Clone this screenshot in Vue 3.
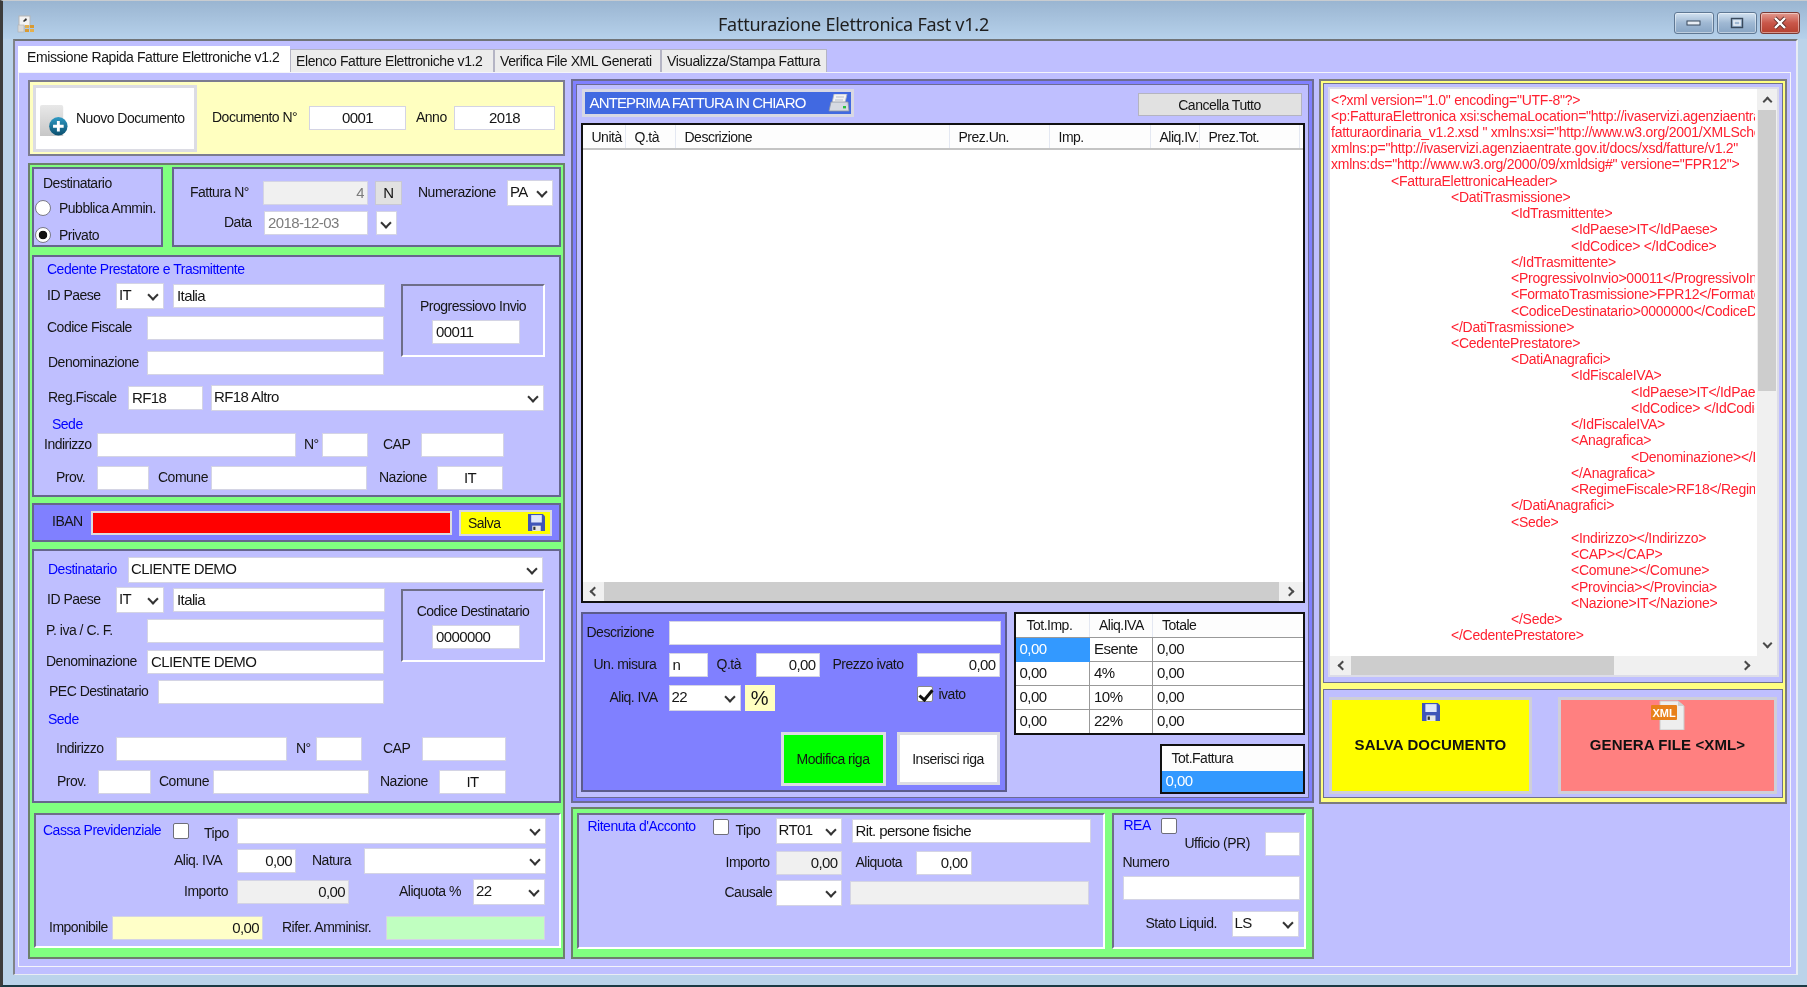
<script setup>
const tabs = [
  { label: 'Emissione Rapida Fatture Elettroniche v1.2', cls: 'tab-a active' },
  { label: 'Elenco Fatture Elettroniche v1.2', cls: 'tab-b' },
  { label: 'Verifica File XML Generati', cls: 'tab-c' },
  { label: 'Visualizza/Stampa Fattura', cls: 'tab-d' },
];

const listCols = [
  { label: 'Unità', w: 43 },
  { label: 'Q.tà', w: 50 },
  { label: 'Descrizione', w: 274 },
  { label: 'Prez.Un.', w: 100 },
  { label: 'Imp.', w: 101 },
  { label: 'Aliq.IV.', w: 49 },
  { label: 'Prez.Tot.', w: 100 },
];

const ivaRows = [
  { imp: '0,00', aliq: 'Esente', tot: '0,00', sel: true },
  { imp: '0,00', aliq: '4%', tot: '0,00' },
  { imp: '0,00', aliq: '10%', tot: '0,00' },
  { imp: '0,00', aliq: '22%', tot: '0,00' },
];

// level = numero di tab nel file xml
const xmlLines = [
  [0, '<?xml version="1.0" encoding="UTF-8"?>'],
  [0, '<p:FatturaElettronica xsi:schemaLocation="http://ivaservizi.agenziaentrate.gov.it/docs/xsd/fatture/v1.2'],
  [0, 'fatturaordinaria_v1.2.xsd " xmlns:xsi="http://www.w3.org/2001/XMLSchema-instance"'],
  [0, 'xmlns:p="http://ivaservizi.agenziaentrate.gov.it/docs/xsd/fatture/v1.2"'],
  [0, 'xmlns:ds="http://www.w3.org/2000/09/xmldsig#" versione="FPR12">'],
  [1, '<FatturaElettronicaHeader>'],
  [2, '<DatiTrasmissione>'],
  [3, '<IdTrasmittente>'],
  [4, '<IdPaese>IT</IdPaese>'],
  [4, '<IdCodice> </IdCodice>'],
  [3, '</IdTrasmittente>'],
  [3, '<ProgressivoInvio>00011</ProgressivoInvio>'],
  [3, '<FormatoTrasmissione>FPR12</FormatoTrasmissione>'],
  [3, '<CodiceDestinatario>0000000</CodiceDestinatario>'],
  [2, '</DatiTrasmissione>'],
  [2, '<CedentePrestatore>'],
  [3, '<DatiAnagrafici>'],
  [4, '<IdFiscaleIVA>'],
  [5, '<IdPaese>IT</IdPaese>'],
  [5, '<IdCodice> </IdCodice>'],
  [4, '</IdFiscaleIVA>'],
  [4, '<Anagrafica>'],
  [5, '<Denominazione></Denominazione>'],
  [4, '</Anagrafica>'],
  [4, '<RegimeFiscale>RF18</RegimeFiscale>'],
  [3, '</DatiAnagrafici>'],
  [3, '<Sede>'],
  [4, '<Indirizzo></Indirizzo>'],
  [4, '<CAP></CAP>'],
  [4, '<Comune></Comune>'],
  [4, '<Provincia></Provincia>'],
  [4, '<Nazione>IT</Nazione>'],
  [3, '</Sede>'],
  [2, '</CedentePrestatore>'],
];
</script>

<template>
  <div class="window">
    <header class="titlebar">
      <svg class="app-icon" viewBox="0 0 18 18">
        <rect x="2" y="1" width="11" height="10" fill="#f2f2f2" stroke="#b5b5b5" />
        <path d="M6 6l3-3 1 2-3 2z" fill="#333" />
        <rect x="1" y="10" width="6" height="7" fill="#d9d9d9" stroke="#b0b0b0" stroke-width=".6" />
        <rect x="8" y="10" width="4" height="3" fill="#e5b04c" />
        <rect x="13" y="10" width="4" height="3" fill="#d89a33" />
        <rect x="8" y="14" width="4" height="3" fill="#d89a33" />
        <rect x="13" y="14" width="4" height="3" fill="#e5b04c" />
      </svg>
      <span class="title">Fatturazione Elettronica Fast v1.2</span>
      <div class="win-buttons">
        <button class="win-btn">
          <svg width="16" height="8" viewBox="0 0 16 8"><rect x="1" y="2" width="13" height="4" fill="#e8eef5" stroke="#39495c" /></svg>
        </button>
        <button class="win-btn">
          <svg width="14" height="12" viewBox="0 0 14 12"><rect x="1.5" y="1.5" width="11" height="9" fill="none" stroke="#39495c" stroke-width="1.4" /><rect x="4" y="4" width="6" height="4" fill="none" stroke="#e8eef5" stroke-width="1.6" /></svg>
        </button>
        <button class="win-btn close">
          <svg width="16" height="14" viewBox="0 0 16 14"><path d="M3 2l10 10M13 2L3 12" stroke="#5a2a26" stroke-width="4" /><path d="M3 2l10 10M13 2L3 12" stroke="#fff" stroke-width="2.4" /></svg>
        </button>
      </div>
    </header>

    <div class="client">
      <nav class="tabs">
        <div v-for="t in tabs" :key="t.label" class="tab" :class="t.cls">{{ t.label }}</div>
      </nav>

      <main class="page">
        <!-- colonna sinistra -->
        <section class="col-left">
          <div class="doc-panel">
            <button class="new-doc ml-3">
              <svg class="new-icon" viewBox="0 0 30 32">
                <defs>
                  <linearGradient id="docg" x1="0" y1="0" x2="0" y2="1"><stop offset="0" stop-color="#e8e8e8" /><stop offset="1" stop-color="#c4c4c4" /></linearGradient>
                  <linearGradient id="plusg" x1="0" y1="0" x2="0" y2="1"><stop offset="0" stop-color="#2f9ac4" /><stop offset="1" stop-color="#0b4f6e" /></linearGradient>
                </defs>
                <rect x="0" y="0" width="24" height="35" rx="2" fill="url(#docg)" />
                <circle cx="19" cy="22" r="9.5" fill="url(#plusg)" />
                <path d="M19 16.5v11M13.5 22h11" stroke="#fff" stroke-width="3" />
              </svg>
              <span>Nuovo Documento</span>
            </button>
            <span class="lab ml-15 w-97">Documento N°</span>
            <input class="tb center w-97" value="0001" />
            <span class="lab ml-10 w-38">Anno</span>
            <input class="tb center w-101" value="2018" />
          </div>

          <div class="green-panel">
            <div class="flex gap-9">
              <div class="panel radio-panel">
                <div class="line mt-5 ml-9">Destinatario</div>
                <label class="radio-row mt-8"><input type="radio" name="dest" /><span>Pubblica Ammin.</span></label>
                <label class="radio-row mt-11"><input type="radio" name="dest" checked /><span>Privato</span></label>
              </div>
              <div class="panel fattura-panel">
                <div class="row mt-12">
                  <span class="lab ml-16 w-73">Fattura N°</span>
                  <input class="tb right disabled grey w-105" value="4" />
                  <button class="btn-n ml-7 w-27">N</button>
                  <span class="lab ml-16 w-89">Numerazione</span>
                  <label class="combo w-46"><select><option>PA</option></select></label>
                </div>
                <div class="row mt-6">
                  <span class="lab ml-50 w-40">Data</span>
                  <input class="tb grey w-104" value="2018-12-03" />
                  <label class="combo only-arrow ml-8 w-21"><select></select></label>
                </div>
              </div>
            </div>

            <div class="panel cedente-panel mt-8">
              <div class="line blue mt-3 ml-13">Cedente Prestatore e Trasmittente</div>
              <div class="flex mt-6">
                <div class="w-350">
                  <div class="row">
                    <span class="lab ml-13 w-69">ID Paese</span>
                    <label class="combo w-48"><select><option>IT</option></select></label>
                    <input class="tb ml-9 w-212" value="Italia" />
                  </div>
                  <div class="row mt-8">
                    <span class="lab ml-13 w-100">Codice Fiscale</span>
                    <input class="tb w-237" />
                  </div>
                  <div class="row mt-11">
                    <span class="lab ml-14 w-99">Denominazione</span>
                    <input class="tb w-237" />
                  </div>
                </div>
                <div class="groove code-box ml-17">
                  <div class="code-title">Progressiovo Invio</div>
                  <input class="tb code-input" value="00011" />
                </div>
              </div>
              <div class="row mt-11">
                <span class="lab ml-14 w-80">Reg.Fiscale</span>
                <input class="tb w-75" value="RF18" />
                <label class="combo ml-8 w-333"><select><option>RF18 Altro</option></select></label>
              </div>
              <div class="line blue mt-5 ml-18">Sede</div>
              <div class="row">
                <span class="lab ml-10 w-53">Indirizzo</span>
                <input class="tb w-199" />
                <span class="lab ml-8 w-18">N°</span>
                <input class="tb w-46" />
                <span class="lab ml-15 w-38">CAP</span>
                <input class="tb w-83" />
              </div>
              <div class="row mt-9">
                <span class="lab ml-22 w-41">Prov.</span>
                <input class="tb w-52" />
                <span class="lab ml-9 w-53">Comune</span>
                <input class="tb w-156" />
                <span class="lab ml-12 w-58">Nazione</span>
                <input class="tb center w-66" value="IT" />
              </div>
            </div>

            <div class="panel iban-panel mt-6">
              <span class="lab ml-18 w-40">IBAN</span>
              <input class="tb iban-input w-359" />
              <button class="salva ml-8">
                <span>Salva</span>
                <svg class="floppy" viewBox="0 0 16 16"><path d="M0 0h14l2 2v14H0z" fill="#3f55b8" /><rect x="3" y="1" width="10" height="7" fill="#dfe6fa" /><rect x="4" y="11" width="8" height="5" fill="#e6e6e6" /><rect x="5" y="12" width="2" height="3" fill="#333" /></svg>
              </button>
            </div>

            <div class="panel dest-panel mt-7">
              <div class="row mt-7">
                <span class="lab blue ml-14 w-80">Destinatario</span>
                <label class="combo w-415"><select><option>CLIENTE DEMO</option></select></label>
              </div>
              <div class="flex mt-6">
                <div class="w-350">
                  <div class="row">
                    <span class="lab ml-13 w-69">ID Paese</span>
                    <label class="combo w-48"><select><option>IT</option></select></label>
                    <input class="tb ml-9 w-212" value="Italia" />
                  </div>
                  <div class="row mt-7">
                    <span class="lab ml-12 w-101">P. iva / C. F.</span>
                    <input class="tb w-237" />
                  </div>
                  <div class="row mt-7">
                    <span class="lab ml-12 w-101">Denominazione</span>
                    <input class="tb w-237" value="CLIENTE DEMO" />
                  </div>
                  <div class="row mt-6">
                    <span class="lab ml-15 w-109">PEC Destinatario</span>
                    <input class="tb w-226" />
                  </div>
                </div>
                <div class="groove code-box ml-17 top-1">
                  <div class="code-title">Codice Destinatario</div>
                  <input class="tb code-input" value="0000000" />
                </div>
              </div>
              <div class="line blue mt-6 ml-14">Sede</div>
              <div class="row mt-9">
                <span class="lab ml-22 w-60">Indirizzo</span>
                <input class="tb w-171" />
                <span class="lab ml-9 w-20">N°</span>
                <input class="tb w-46" />
                <span class="lab ml-21 w-39">CAP</span>
                <input class="tb w-84" />
              </div>
              <div class="row mt-9">
                <span class="lab ml-23 w-41">Prov.</span>
                <input class="tb w-53" />
                <span class="lab ml-8 w-54">Comune</span>
                <input class="tb w-156" />
                <span class="lab ml-11 w-59">Nazione</span>
                <input class="tb center w-67" value="IT" />
              </div>
            </div>

            <div class="groove cassa-panel mt-10">
              <div class="row mt-4">
                <span class="lab blue ml-7 w-130">Cassa Previdenziale</span>
                <input type="checkbox" class="chk" />
                <span class="lab ml-15 w-33 down-3">Tipo</span>
                <label class="combo w-309"><select></select></label>
              </div>
              <div class="row mt-6">
                <span class="lab ml-138 w-63">Aliq. IVA</span>
                <input class="tb right w-59" value="0,00" />
                <span class="lab ml-16 w-52">Natura</span>
                <label class="combo w-182"><select></select></label>
              </div>
              <div class="row mt-7">
                <span class="lab ml-148 w-53">Importo</span>
                <input class="tb right disabled w-112" value="0,00" />
                <span class="lab ml-50 w-74">Aliquota %</span>
                <label class="combo w-72"><select><option>22</option></select></label>
              </div>
              <div class="row mt-12">
                <span class="lab ml-13 w-63">Imponibile</span>
                <input class="tb right cream w-151" value="0,00" />
                <span class="lab ml-19 w-104">Rifer. Amminisr.</span>
                <input class="tb mint w-159" />
              </div>
            </div>
          </div>
        </section>

        <!-- colonna centrale -->
        <section class="col-mid">
          <div class="blue-panel">
            <div class="blue-inner">
              <div class="flex">
                <button class="anteprima ml-1">
                  <span>ANTEPRIMA FATTURA IN CHIARO</span>
                  <svg class="printer" viewBox="0 0 22 18">
                    <path d="M6 0h13l-2 9H4z" fill="#f4f4f4" stroke="#aeb4c0" stroke-width=".8" />
                    <path d="M3 8h17l1 9H1z" fill="#d6dae2" stroke="#8e94a2" stroke-width=".8" />
                    <rect x="15" y="12" width="3" height="2.4" fill="#28c23c" />
                    <path d="M8 3h8M7 6h8" stroke="#b9bec9" />
                  </svg>
                </button>
                <button class="cancella">Cancella Tutto</button>
              </div>

              <div class="list-box">
                <div class="list-head">
                  <div v-for="c in listCols" :key="c.label" class="list-col" :style="{ width: c.w + 'px' }">{{ c.label }}</div>
                </div>
                <div class="list-body"></div>
                <div class="hscroll">
                  <span class="sb-cell"><i class="arrow left"></i></span>
                  <span class="sb-thumb list-thumb"></span>
                  <span class="sb-cell wide"><i class="arrow right"></i></span>
                </div>
              </div>

              <div class="flex mt-9">
                <div class="row-panel">
                  <div class="row mt-7">
                    <span class="lab ml-4 w-82">Descrizione</span>
                    <input class="tb w-332" />
                  </div>
                  <div class="row mt-8">
                    <span class="lab ml-11 w-75">Un. misura</span>
                    <input class="tb w-39" value="n" />
                    <span class="lab ml-9 w-39">Q.tà</span>
                    <input class="tb right w-64" value="0,00" />
                    <span class="lab ml-13 w-84">Prezzo ivato</span>
                    <input class="tb right w-83" value="0,00" />
                  </div>
                  <div class="row mt-9">
                    <span class="lab ml-27 w-59">Aliq. IVA</span>
                    <label class="combo w-72"><select><option>22</option></select></label>
                    <button class="perc ml-4">%</button>
                    <label class="ivato">
                      <input type="checkbox" class="chk" checked />
                      <span>ivato</span>
                    </label>
                  </div>
                  <div class="flex mt-22">
                    <button class="riga riga-mod ml-198">Modifica riga</button>
                    <button class="riga riga-ins ml-11">Inserisci riga</button>
                  </div>
                </div>

                <div class="ml-7">
                  <table class="iva-table">
                    <thead>
                      <tr><th class="c1">Tot.Imp.</th><th class="c2">Aliq.IVA</th><th>Totale</th></tr>
                    </thead>
                    <tbody>
                      <tr v-for="r in ivaRows" :key="r.aliq">
                        <td :class="{ sel: r.sel }">{{ r.imp }}</td>
                        <td>{{ r.aliq }}</td>
                        <td>{{ r.tot }}</td>
                      </tr>
                    </tbody>
                  </table>
                  <div class="tot-box">
                    <div class="tot-head">Tot.Fattura</div>
                    <div class="tot-val">0,00</div>
                  </div>
                </div>
              </div>
            </div>
          </div>

          <div class="green-mid">
            <div class="groove rit-panel">
              <div class="row mt-4">
                <span class="lab blue ml-9 w-125 up-4">Ritenuta d'Acconto</span>
                <input type="checkbox" class="chk up-5" />
                <span class="lab ml-7 w-40">Tipo</span>
                <label class="combo w-66"><select><option>RT01</option></select></label>
                <input class="tb ml-10 w-239" value="Rit. persone fisiche" />
              </div>
              <div class="row mt-8">
                <span class="lab ml-147 w-50">Importo</span>
                <input class="tb right disabled w-66" value="0,00" />
                <span class="lab ml-14 w-60">Aliquota</span>
                <input class="tb right w-56" value="0,00" />
              </div>
              <div class="row mt-6">
                <span class="lab ml-146 w-51">Causale</span>
                <label class="combo w-66"><select></select></label>
                <input class="tb disabled ml-8 w-239" />
              </div>
            </div>
            <div class="groove rea-panel">
              <div class="row rea-top">
                <span class="lab blue ml-10 w-37">REA</span>
                <input type="checkbox" class="chk" />
              </div>
              <div class="row rea-uff">
                <span class="lab ml-71 w-80">Ufficio (PR)</span>
                <input class="tb w-35" />
              </div>
              <div class="line rea-num ml-9">Numero</div>
              <div class="row mt-5">
                <input class="tb ml-9 w-177" />
              </div>
              <div class="row mt-12">
                <span class="lab ml-32 w-86">Stato Liquid.</span>
                <label class="combo w-67"><select><option>LS</option></select></label>
              </div>
            </div>
          </div>
        </section>

        <!-- colonna destra -->
        <section class="col-right">
          <div class="yellow-panel">
            <div class="xml-panel">
              <div class="xml-box">
                <div class="xml-top">
                  <div class="xml-text">
                    <div v-for="(l, i) in xmlLines" :key="i" class="xml-line" :style="{ paddingLeft: l[0] * 60 + 'px' }">{{ l[1] }}</div>
                  </div>
                  <div class="vscroll">
                    <span class="sb-cell"><i class="arrow up"></i></span>
                    <span class="sb-thumb v-thumb"></span>
                    <span class="sb-fill"></span>
                    <span class="sb-cell"><i class="arrow down"></i></span>
                  </div>
                </div>
                <div class="hscroll xml-h">
                  <span class="sb-cell"><i class="arrow left"></i></span>
                  <span class="sb-thumb h-thumb"></span>
                  <span class="sb-fill"></span>
                  <span class="sb-cell"><i class="arrow right"></i></span>
                </div>
              </div>
            </div>
            <div class="action-panel">
              <button class="action action-save">
                <svg class="save-icon" viewBox="0 0 16 16"><path d="M0 0h14l2 2v14H0z" fill="#3f55b8" /><rect x="3" y="1" width="10" height="7" fill="#dfe6fa" /><rect x="4" y="11" width="8" height="5" fill="#e6e6e6" /><rect x="5" y="12" width="2" height="3" fill="#333" /></svg>
                <span>SALVA DOCUMENTO</span>
              </button>
              <button class="action action-gen">
                <svg class="xml-icon" viewBox="0 0 34 30">
                  <path d="M9 1h18l6 5v24H9z" fill="#eeeeee" stroke="#c9c9c9" />
                  <path d="M27 1v5h6z" fill="#cfcfcf" />
                  <rect x="0" y="5" width="26" height="15" rx="1" fill="#e8801a" />
                  <text x="13" y="16.5" text-anchor="middle" class="xml-badge">XML</text>
                </svg>
                <span>GENERA FILE &lt;XML&gt;</span>
              </button>
            </div>
          </div>
        </section>
      </main>
    </div>
  </div>
</template>

<style scoped>
* { box-sizing: border-box; }
button { letter-spacing: inherit; white-space: nowrap; }

.window {
  width: 1807px;
  height: 987px;
  display: flex;
  flex-direction: column;
  overflow: hidden;
  background: #bbd3ea;
  border-top: 1px solid #c8ccd0;
  border-left: 3px solid #3c3c3c;
  border-bottom: 2px solid #1c3a44;
  font: 14px/18px "Liberation Sans", Arial, sans-serif;
  letter-spacing: -0.5px;
  color: #151515;
  filter: blur(0.35px);
}

/* barra del titolo */
.titlebar {
  height: 38px;
  flex: none;
  display: flex;
  background: linear-gradient(#9ab5d1, #b6d1eb);
}
.app-icon { width: 18px; height: 18px; margin: 14px 0 0 14px; }
.title {
  margin: 11px 0 0 683px;
  font: 18px/24px "Noto Sans", "Open Sans", sans-serif;
  letter-spacing: -0.25px;
  color: #1e1e1e;
}
.win-buttons { margin: 11px 0 0 auto; padding-right: 7px; display: flex; gap: 3px; }
.win-btn {
  width: 40px;
  height: 22px;
  padding: 0;
  display: flex;
  align-items: center;
  justify-content: center;
  border: 1px solid #5f7894;
  border-radius: 3px;
  background: linear-gradient(#d3e2f1, #9fb8d3 50%, #88a5c4);
  box-shadow: inset 0 0 0 1px rgba(255, 255, 255, .45);
}
.win-btn.close { border-color: #7a3a34; background: linear-gradient(#e39b90, #c9574a 50%, #b5402f); }

/* area client e tab */
.client {
  flex: 1;
  margin: 0 9px 10px 10px;
  padding: 5px 5px 7px 3px;
  display: flex;
  flex-direction: column;
  background: #bfbfff;
  border-top: 2px solid #707478;
  border-left: 2px solid #808488;
  border-right: 2px solid #e8ecf4;
  border-bottom: 1px solid #e8ecf4;
}
.tabs { display: flex; height: 26px; flex: none; align-items: flex-end; }
.tab {
  height: 23px;
  padding: 2px 0 0 5px;
  font-size: 14px;
  letter-spacing: -0.4px;
  background: #ececec;
  border: 1px solid #b4b4c4;
  border-bottom: 0;
  white-space: nowrap;
}
.tab.active { height: 26px; background: #fff; border-color: #fff; padding: 1px 0 0 8px; }
.tab-a { width: 272px; }
.tab-b { width: 204px; }
.tab-c { width: 167px; }
.tab-d { width: 166px; }
.page {
  flex: 1;
  display: grid;
  grid-template-columns: 537px 743px 468px;
  column-gap: 5.5px;
  padding: 6px 0 0 9px;
  border: 1px solid #f4f4fa;
}

/* mattoni comuni */
.flex { display: flex; }
.gap-9 { gap: 9px; }
.row { display: flex; align-items: center; height: 24px; }
.line { height: 18px; white-space: nowrap; }
.lab { flex: none; white-space: nowrap; padding-bottom: 3px; }
.blue { color: #0000ff; }
.panel { border: 2px solid #66668c; background: #bfbfff; }
.groove {
  background: #bfbfff;
  border: 2px solid;
  border-color: #6e6e88 #fff #fff #6e6e88;
}
.tb {
  flex: none;
  height: 24px;
  padding: 0 3px 2px;
  border: 1px solid #d4d4e4;
  outline: 1px solid #fff;
  outline-offset: -2px;
  background: #fff;
  font: inherit;
  font-size: 15px;
  letter-spacing: -0.6px;
  color: #151515;
}
.center { text-align: center; }
.right { text-align: right; }
.disabled { background: #f0f0f0; outline: 0; color: #151515; }
.grey { color: #7c7c7c; }
.cream { background: #ffffc8; outline: 0; }
.mint { background: #c0ffc0; outline: 0; }
.combo {
  flex: none;
  height: 26px;
  display: block;
  position: relative;
  background: #fff;
  border: 1px solid #d4d4e4;
}
.combo select {
  width: 100%;
  height: 100%;
  padding: 0 0 2px 2px;
  border: 0;
  outline: 0;
  appearance: none;
  background: transparent;
  font: inherit;
  font-size: 15px;
  letter-spacing: -0.6px;
  color: #151515;
}
.combo::after {
  content: "";
  position: absolute;
  right: 6px;
  top: 7px;
  width: 6px;
  height: 6px;
  border-right: 2px solid #333;
  border-bottom: 2px solid #333;
  transform: rotate(45deg);
}
.chk {
  flex: none;
  appearance: none;
  position: relative;
  width: 16px;
  height: 16px;
  margin: 0;
  background: #fff;
  border: 1px solid #6e6e7a;
  border-radius: 2px;
}
.chk:checked::after {
  content: "";
  position: absolute;
  left: 4px;
  top: 0;
  width: 5px;
  height: 11px;
  border-right: 3px solid #111;
  border-bottom: 3px solid #111;
  transform: rotate(40deg);
}

/* colonna sinistra */
.col-left { display: flex; flex-direction: column; padding-top: 1px; }
.doc-panel {
  height: 76px;
  display: flex;
  align-items: center;
  background: #ffffc0;
  border: 2px solid #7c7c90;
}
.new-doc {
  flex: none;
  width: 164px;
  height: 67px;
  padding: 0 0 0 4px;
  display: flex;
  align-items: center;
  gap: 7px;
  background: #fff;
  border: 3px solid #dcdce4;
  font: inherit;
  color: inherit;
}
.new-icon { width: 29px; height: 31px; margin-top: 5px; flex: none; }
.green-panel {
  margin-top: 7px;
  width: 537px;
  height: 796px;
  padding: 2px;
  background: #80ff80;
  border: 2px solid #6c806c;
}
.radio-panel { width: 131px; height: 80px; }
.fattura-panel { width: 389px; height: 80px; }
.radio-row { height: 16px; margin-left: 1px; display: flex; align-items: center; gap: 8px; white-space: nowrap; }
.radio-row input {
  appearance: none;
  width: 16px;
  height: 16px;
  margin: 0;
  border: 1.5px solid #7a7a86;
  border-radius: 50%;
  background: #fff;
}
.radio-row input:checked { background: radial-gradient(circle, #111 0 4px, #fff 4.6px); }
.btn-n {
  flex: none;
  height: 24px;
  padding: 0;
  background: #e1e1e1;
  border: 1px solid #c8c8d4;
  font: inherit;
  font-size: 15px;
  color: inherit;
}
.only-arrow { height: 24px; }
.cedente-panel { height: 242px; }
.dest-panel { height: 254px; }
.iban-panel { height: 39px; display: flex; align-items: center; background: #8080ff; }
.iban-input { height: 22px; background: #ff0000; border: 1px solid #e0e0ea; outline: 2px solid #ddd; outline-offset: -1px; }
.salva {
  flex: none;
  width: 93px;
  height: 26px;
  padding: 0 5px 0 7px;
  display: flex;
  align-items: center;
  justify-content: space-between;
  background: #ffff00;
  border: 2px solid #d8d8e4;
  font: inherit;
  color: inherit;
}
.floppy { width: 17px; height: 17px; }
.code-box { width: 144px; height: 73px; text-align: center; }
.code-title { margin-top: 11px; height: 18px; white-space: nowrap; }
.code-input { display: block; width: 88px; margin: 5px 0 0 29px; text-align: left; }
.cassa-panel { margin-left: 2px; width: 527px; height: 135px; }

/* colonna centrale */
.col-mid { display: flex; flex-direction: column; }
.blue-panel {
  height: 724px;
  padding: 3px;
  background: #8080ff;
  border: 2px solid #6c6c92;
}
.blue-inner {
  height: 100%;
  padding: 4px 2px 0 4px;
  background: #bfbfff;
  border: 1px solid #6c6c92;
}
.anteprima {
  width: 272px;
  height: 28px;
  padding: 0 1px 0 5px;
  display: flex;
  align-items: center;
  justify-content: space-between;
  background: #4169e1;
  border: 3px solid #d8d8e4;
  font: inherit;
  font-size: 15px;
  letter-spacing: -0.85px;
  color: #fff;
}
.printer { width: 22px; height: 18px; }
.cancella {
  width: 164px;
  height: 23px;
  margin: 4px 0 0 284px;
  padding: 0;
  background: #e1e1e1;
  border: 1px solid #b4b4c0;
  font: inherit;
  color: inherit;
}
.list-box {
  margin-top: 6px;
  width: 724px;
  height: 480px;
  display: flex;
  flex-direction: column;
  background: #fff;
  border: 2px solid #111;
}
.list-head {
  height: 25px;
  flex: none;
  display: flex;
  background: #fdfdfd;
  border-bottom: 2px solid #c4c4c4;
}
.list-col { padding: 3px 0 0 9px; border-right: 1px solid #e4e8f2; white-space: nowrap; overflow: hidden; }
.list-body { flex: 1; }
.hscroll { height: 19px; flex: none; display: flex; background: #f0f0f0; }
.vscroll { width: 20px; flex: none; display: flex; flex-direction: column; background: #f0f0f0; }
.sb-cell { width: 21px; height: 21px; flex: none; display: flex; align-items: center; justify-content: center; }
.hscroll .sb-cell { height: 19px; }
.sb-cell.wide { width: 25px; }
.sb-thumb { background: #cdcdcd; flex: none; }
.sb-fill { flex: 1; }
.list-thumb { width: 675px; }
.arrow { width: 7px; height: 7px; border: solid #4a4a4a; border-width: 2px 0 0 2px; }
.arrow.left { transform: rotate(-45deg); margin-left: 3px; }
.arrow.right { transform: rotate(135deg); margin-right: 3px; }
.arrow.up { transform: rotate(45deg); margin-top: 4px; }
.arrow.down { transform: rotate(225deg); margin-bottom: 4px; }
.row-panel {
  width: 426px;
  height: 180px;
  background: #8080ff;
  border: 2px solid #5c5c8c;
}
.perc {
  width: 30px;
  height: 26px;
  padding: 0;
  background: #ffffc0;
  border: 0;
  font: 20px "Liberation Sans", Arial, sans-serif;
  color: #151515;
}
.ivato {
  margin: -9px 0 0 142px;
  display: flex;
  align-items: center;
  gap: 6px;
}
.ivato .chk { border-color: #888; }
.riga {
  flex: none;
  padding: 0;
  font: inherit;
  color: inherit;
  border: 3px solid #dcdce4;
}
.riga-mod { width: 105px; height: 54px; background: #00ff00; }
.riga-ins { width: 103px; height: 53px; background: #fff; }
.iva-table {
  width: 291px;
  height: 123px;
  table-layout: fixed;
  border-collapse: collapse;
  background: #fff;
  border: 2px solid #111;
}
.iva-table th { height: 24px; padding: 0 0 0 9px; font-weight: 400; text-align: left; background: #fdfdfd; border-bottom: 1px solid #999; border-right: 1px solid #e4e8f2; }
.iva-table td { padding: 0 0 0 4px; border: 1px solid #999; border-width: 1px 1px 1px 0; font-size: 15px; letter-spacing: -0.5px; }
.iva-table .c1 { width: 75px; padding-left: 11px; }
.iva-table .c2 { width: 63px; padding-left: 9px; }
.iva-table .sel { background: #3399ff; color: #fff; border-color: #3399ff; }
.tot-box {
  margin: 9px 0 0 146px;
  width: 145px;
  height: 50px;
  display: flex;
  flex-direction: column;
  border: 2px solid #111;
}
.tot-head { height: 25px; padding: 3px 0 0 10px; background: #fdfdfd; }
.tot-val { flex: 1; padding: 1px 0 0 4px; background: #3399ff; color: #fff; font-size: 15px; letter-spacing: -0.5px; }
.green-mid {
  margin-top: 4px;
  height: 152px;
  padding: 4px 0 0 4px;
  display: flex;
  gap: 7px;
  background: #80ff80;
  border: 2px solid #6c806c;
}
.rit-panel { width: 528px; height: 136px; }
.rea-panel { width: 194px; height: 136px; }
.up-4 { margin-top: -8px; }
.up-5 { margin-top: -8px; }
.down-3 { margin-top: 6px; }
.top-1 { margin-top: 1px; }
.rea-top { margin-top: 2px; height: 18px; }
.rea-uff { margin-top: -3px; }
.rea-num { margin-top: -3px; }

/* colonna destra */
.col-right { display: flex; flex-direction: column; }
.yellow-panel {
  height: 725px;
  padding: 2px;
  background: #ffff80;
  border: 2px solid #7c7c7c;
}
.xml-panel {
  height: 600px;
  padding: 3px 3px 3px 4px;
  background: #bfbfff;
  border: 1px solid #70708c;
}
.xml-box {
  width: 451px;
  height: 590px;
  display: flex;
  flex-direction: column;
  background: #fff;
  border: 2px solid #dcdce8;
}
.xml-top { flex: 1; min-height: 0; display: flex; }
.xml-text { flex: 1; min-width: 0; padding: 2.5px 2px 0 1px; overflow: hidden; }
.xml-line { height: 16.24px; font-size: 14px; line-height: 16.24px; letter-spacing: -0.25px; color: #ff2030; white-space: nowrap; overflow: hidden; }
.v-thumb { height: 281px; margin: 0 1px; }
.xml-h { padding-right: 20px; }
.h-thumb { width: 263px; }
.action-panel {
  margin-top: 6px;
  height: 109px;
  padding: 7px 0 0 5px;
  display: flex;
  gap: 26px;
  background: #bfbfff;
  border: 1px solid #70708c;
}
.action {
  height: 97px;
  padding: 0;
  display: flex;
  flex-direction: column;
  align-items: center;
  font: 700 15px/18px "Liberation Sans", Arial, sans-serif;
  letter-spacing: 0.1px;
  color: #111;
  border: 3px solid #cfcfd8;
}
.action-save { width: 203px; background: #ffff00; }
.action-gen { width: 219px; background: #ff8080; }
.save-icon { width: 18px; height: 18px; margin: 3px 0 15px; }
.xml-icon { width: 34px; height: 30px; margin: 0 0 6px; }
.xml-badge { font: 700 11px "Liberation Sans", Arial, sans-serif; fill: #fff; letter-spacing: 0; }

/* misure */
.w-18 { width: 18px; } .w-20 { width: 20px; } .w-21 { width: 21px; } .w-27 { width: 27px; }
.w-33 { width: 33px; } .w-35 { width: 35px; } .w-37 { width: 37px; } .w-38 { width: 38px; }
.w-39 { width: 39px; } .w-40 { width: 40px; } .w-41 { width: 41px; } .w-46 { width: 46px; }
.w-48 { width: 48px; } .w-50 { width: 50px; } .w-51 { width: 51px; } .w-52 { width: 52px; }
.w-53 { width: 53px; } .w-54 { width: 54px; } .w-56 { width: 56px; } .w-58 { width: 58px; }
.w-59 { width: 59px; } .w-60 { width: 60px; } .w-63 { width: 63px; } .w-64 { width: 64px; }
.w-66 { width: 66px; } .w-67 { width: 67px; } .w-69 { width: 69px; } .w-72 { width: 72px; }
.w-73 { width: 73px; } .w-74 { width: 74px; } .w-75 { width: 75px; } .w-80 { width: 80px; }
.w-82 { width: 82px; } .w-83 { width: 83px; } .w-84 { width: 84px; } .w-86 { width: 86px; }
.w-89 { width: 89px; } .w-97 { width: 97px; } .w-99 { width: 99px; } .w-100 { width: 100px; }
.w-101 { width: 101px; } .w-104 { width: 104px; } .w-105 { width: 105px; } .w-109 { width: 109px; }
.w-112 { width: 112px; } .w-125 { width: 125px; } .w-130 { width: 130px; } .w-151 { width: 151px; }
.w-156 { width: 156px; } .w-159 { width: 159px; } .w-171 { width: 171px; } .w-177 { width: 177px; }
.w-182 { width: 182px; } .w-199 { width: 199px; } .w-212 { width: 212px; } .w-226 { width: 226px; }
.w-237 { width: 237px; } .w-239 { width: 239px; } .w-309 { width: 309px; } .w-332 { width: 332px; }
.w-333 { width: 333px; } .w-350 { width: 350px; flex: none; } .w-359 { width: 359px; } .w-415 { width: 415px; }
.ml-1 { margin-left: 1px; } .ml-3 { margin-left: 3px; } .ml-4 { margin-left: 4px; } .ml-7 { margin-left: 7px; }
.ml-8 { margin-left: 8px; } .ml-9 { margin-left: 9px; } .ml-10 { margin-left: 10px; } .ml-11 { margin-left: 11px; }
.ml-12 { margin-left: 12px; } .ml-13 { margin-left: 13px; } .ml-14 { margin-left: 14px; } .ml-15 { margin-left: 15px; }
.ml-16 { margin-left: 16px; } .ml-17 { margin-left: 17px; } .ml-18 { margin-left: 18px; } .ml-19 { margin-left: 19px; }
.ml-21 { margin-left: 21px; } .ml-22 { margin-left: 22px; } .ml-23 { margin-left: 23px; } .ml-27 { margin-left: 27px; }
.ml-32 { margin-left: 32px; } .ml-50 { margin-left: 50px; } .ml-71 { margin-left: 71px; } .ml-138 { margin-left: 138px; }
.ml-146 { margin-left: 146px; } .ml-147 { margin-left: 147px; } .ml-148 { margin-left: 148px; } .ml-198 { margin-left: 198px; }
.mt-3 { margin-top: 3px; } .mt-4 { margin-top: 4px; } .mt-5 { margin-top: 5px; } .mt-6 { margin-top: 6px; }
.mt-7 { margin-top: 7px; } .mt-8 { margin-top: 8px; } .mt-9 { margin-top: 9px; } .mt-10 { margin-top: 10px; }
.mt-11 { margin-top: 11px; } .mt-12 { margin-top: 12px; } .mt-22 { margin-top: 22px; }
</style>

<style>
html, body { margin: 0; padding: 0; overflow: hidden; background: #bbd3ea; }
</style>
